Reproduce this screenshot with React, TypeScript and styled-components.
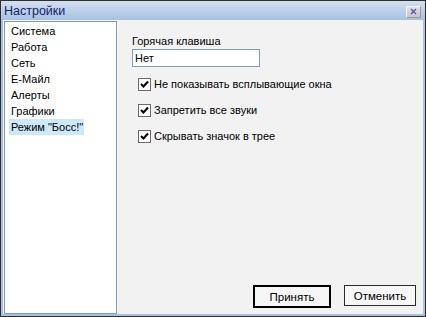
import * as React from "react";
import styled, { createGlobalStyle } from "styled-components";

const GlobalStyle = createGlobalStyle`
  html, body {
    margin: 0;
    padding: 0;
    background: #ffffff;
  }
  * {
    box-sizing: border-box;
  }
`;

const sections = [
  "Система",
  "Работа",
  "Сеть",
  "E-Майл",
  "Алерты",
  "Графики",
  'Режим "Босс!"',
];

const options = [
  "Не показывать всплывающие окна",
  "Запретить все звуки",
  "Скрывать значок в трее",
];

export default function App() {
  const [selected, setSelected] = React.useState(6);
  const [checked, setChecked] = React.useState([true, true, true]);

  const toggle = (i: number) =>
    setChecked((prev) => prev.map((v, j) => (j === i ? !v : v)));

  return (
    <>
      <GlobalStyle />
      <Window>
        <TitleBar>
          <Title>Настройки</Title>
          <CloseButton aria-label="Закрыть">
            <svg width="7" height="7" viewBox="0 0 7 7">
              <path
                d="M1 1 L6 6 M6 1 L1 6"
                stroke="#5a4fc8"
                strokeWidth="1.4"
                fill="none"
              />
            </svg>
          </CloseButton>
        </TitleBar>
        <Frame>
          <Sidebar>
            {sections.map((name, i) => (
              <Item
                key={name}
                $active={i === selected}
                onClick={() => setSelected(i)}
              >
                {name}
              </Item>
            ))}
          </Sidebar>
          <Content>
            <Label>Горячая клавиша</Label>
            <HotkeyInput defaultValue="Нет" />
            <Options>
              {options.map((text, i) => (
                <CheckRow key={text} onClick={() => toggle(i)}>
                  <Box>
                    {checked[i] && (
                      <svg width="9" height="9" viewBox="0 0 9 9">
                        <path
                          d="M1 4 L3.5 6.5 L8 1.5"
                          stroke="#000"
                          strokeWidth="2"
                          fill="none"
                        />
                      </svg>
                    )}
                  </Box>
                  <span>{text}</span>
                </CheckRow>
              ))}
            </Options>
            <Buttons>
              <Button $primary>Принять</Button>
              <Button>Отменить</Button>
            </Buttons>
          </Content>
        </Frame>
      </Window>
    </>
  );
}

const Window = styled.div`
  width: 426px;
  height: 317px;
  display: flex;
  flex-direction: column;
  border: 1px solid #2f2f2f;
  background: #a9c1df;
  font-family: "Liberation Sans", Arial, sans-serif;
  font-size: 11px;
  color: #000;
`;

const TitleBar = styled.div`
  height: 19px;
  flex: none;
  display: flex;
  align-items: center;
  justify-content: space-between;
  padding: 0 4px 0 3px;
  background: linear-gradient(#d3e0f1, #a7c1e2);
`;

const Title = styled.div`
  font-size: 12.5px;
  color: #13206a;
  line-height: 19px;
  padding-top: 1px;
`;

const CloseButton = styled.button`
  width: 15px;
  height: 12px;
  padding: 0;
  margin-top: 2px;
  display: flex;
  align-items: center;
  justify-content: center;
  border: 1px solid #9a9a9a;
  border-top-color: #f4f4f4;
  border-left-color: #f4f4f4;
  background: linear-gradient(#e2e2e2, #c6c6c6);
`;

const Frame = styled.div`
  flex: 1;
  display: flex;
  margin: 0 2px 2px 2px;
  padding: 1px 0 0 1px;
  background: #f2f2f2;
`;

const Sidebar = styled.div`
  width: 113px;
  flex: none;
  display: flex;
  flex-direction: column;
  padding: 1px 0 0 4px;
  background: #ffffff;
  border: 1px solid #7f9db9;
`;

const Item = styled.div<{ $active?: boolean }>`
  height: 16px;
  line-height: 16px;
  padding-left: 2px;
  width: 75px;
  white-space: nowrap;
  cursor: default;
  background: ${(p) => (p.$active ? "#cde8f8" : "transparent")};
`;

const Content = styled.div`
  flex: 1;
  display: flex;
  flex-direction: column;
  padding: 13px 7px 6px 15px;
`;

const Label = styled.div`
  line-height: 14px;
`;

const HotkeyInput = styled.input`
  width: 128px;
  height: 18px;
  margin-top: 1px;
  padding: 0 2px;
  border: 1px solid #7f9db9;
  background: #fff;
  font-family: inherit;
  font-size: 11px;
  outline: none;
`;

const Options = styled.div`
  display: flex;
  flex-direction: column;
  gap: 13px;
  padding: 11px 0 0 6px;
`;

const CheckRow = styled.label`
  display: flex;
  align-items: center;
  gap: 3px;
  line-height: 13px;
  cursor: default;
`;

const Box = styled.span`
  width: 13px;
  height: 13px;
  flex: none;
  display: flex;
  align-items: center;
  justify-content: center;
  border: 1px solid #6b6b6b;
  background: #fff;
`;

const Buttons = styled.div`
  margin-top: auto;
  display: flex;
  justify-content: flex-end;
  gap: 13px;
`;

const Button = styled.button<{ $primary?: boolean }>`
  width: ${(p) => (p.$primary ? "78px" : "72px")};
  height: ${(p) => (p.$primary ? "23px" : "21px")};
  margin-bottom: ${(p) => (p.$primary ? "0" : "1px")};
  padding: 0;
  font-family: inherit;
  font-size: 11.5px;
  color: #000;
  background: #f6f6f6;
  border: ${(p) => (p.$primary ? "2px solid #000" : "1px solid #2a2a2a")};
`;
